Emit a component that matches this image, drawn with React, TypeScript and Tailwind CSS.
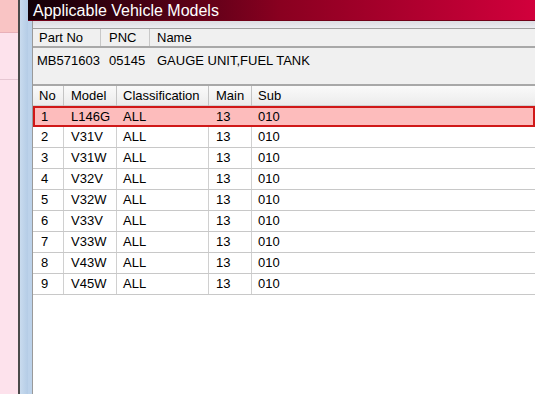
import React from "react";

const rows = [
  ["1", "L146G", "ALL", "13", "010"],
  ["2", "V31V", "ALL", "13", "010"],
  ["3", "V31W", "ALL", "13", "010"],
  ["4", "V32V", "ALL", "13", "010"],
  ["5", "V32W", "ALL", "13", "010"],
  ["6", "V33V", "ALL", "13", "010"],
  ["7", "V33W", "ALL", "13", "010"],
  ["8", "V43W", "ALL", "13", "010"],
  ["9", "V45W", "ALL", "13", "010"],
];

const cols = "grid grid-cols-[31px_53px_92px_43px_1fr]";

export default function App() {
  return (
    <div
      className="flex w-[535px] h-[394px] overflow-hidden text-[13px] text-black"
      style={{ fontFamily: '"Liberation Sans", Arial, sans-serif' }}
    >
      {/* left pink strip */}
      <div className="w-[18px] flex flex-col">
        <div className="h-[33px] bg-[#f9c4c4] border-b border-[#e8b0b8]" />
        <div className="h-[47px] bg-[#fde2ec] border-b border-[#e6c6d2]" />
        <div className="flex-1 bg-[#fde2ec]" />
      </div>
      <div className="w-[2px] bg-[#4a4a4a]" />
      {/* blue window frame */}
      <div className="w-[8px] bg-gradient-to-r from-[#c9dbee] to-[#b4cce6]" />
      {/* window */}
      <div className="flex-1 flex flex-col">
        <div className="h-[21px] bg-gradient-to-r from-[#120006] via-[#8a0020] to-[#d2003c] text-white text-[16px] leading-[21px] pl-[5px] border-b border-[#700018]">
          Applicable Vehicle Models
        </div>
        <div className="flex-1 flex">
          <div className="w-[4px] bg-[#bcd2ea]" />
          <div className="w-px bg-[#9a9a9a]" />
          <div className="flex-1 flex flex-col bg-white">
            <div className="h-[8px] bg-gradient-to-b from-[#dcdce2] to-[#ececf0] border-b border-[#a0a0a0]" />
            {/* part header panel */}
            <div className="bg-[#f0f0f0] h-[57px] border-b-2 border-[#a8a8a8] flex flex-col">
              <div className="h-[19px] flex border-b-2 border-[#a8a8a8] leading-[18px]">
                <div className="w-[68px] pl-[6px] border-r border-[#c8c8c8]">Part No</div>
                <div className="w-[49px] pl-[8px] border-r border-[#c8c8c8]">PNC</div>
                <div className="flex-1 pl-[7px]">Name</div>
              </div>
              <div className="flex pt-[5px] leading-[15px]">
                <div className="pl-[4px] w-[76px]">MB571603</div>
                <div className="w-[48px]">05145</div>
                <div>GAUGE UNIT,FUEL TANK</div>
              </div>
            </div>
            {/* table header */}
            <div className={`${cols} h-[20px] bg-gradient-to-b from-[#fafafa] to-[#ececec] leading-[20px] border-b border-[#d0d0d0]`}>
              <div className="pl-[6px] border-r border-[#c4c4c4]">No</div>
              <div className="pl-[7px] border-r border-[#c4c4c4]">Model</div>
              <div className="pl-[6px] border-r border-[#c4c4c4]">Classification</div>
              <div className="pl-[7px] border-r border-[#c4c4c4]">Main</div>
              <div className="pl-[6px]">Sub</div>
            </div>
            {rows.map((r, i) =>
              i === 0 ? (
                <div
                  key={i}
                  className={`${cols} h-[21px] bg-[#fdbcbc] border-2 border-[#d01818] leading-[17px]`}
                >
                  <div className="pl-[6px]">{r[0]}</div>
                  <div className="pl-[5px]">{r[1]}</div>
                  <div className="pl-[4px]">{r[2]}</div>
                  <div className="pl-[5px]">{r[3]}</div>
                  <div className="pl-[4px]">{r[4]}</div>
                </div>
              ) : (
                <div
                  key={i}
                  className={`${cols} h-[21px] border-b border-[#c8c8c8] leading-[20px]`}
                >
                  <div className="pl-[8px] border-r border-[#d0d0d0]">{r[0]}</div>
                  <div className="pl-[7px] border-r border-[#d0d0d0]">{r[1]}</div>
                  <div className="pl-[6px] border-r border-[#d0d0d0]">{r[2]}</div>
                  <div className="pl-[7px] border-r border-[#d0d0d0]">{r[3]}</div>
                  <div className="pl-[6px]">{r[4]}</div>
                </div>
              )
            )}
            <div className="flex-1 bg-white" />
          </div>
        </div>
      </div>
    </div>
  );
}
